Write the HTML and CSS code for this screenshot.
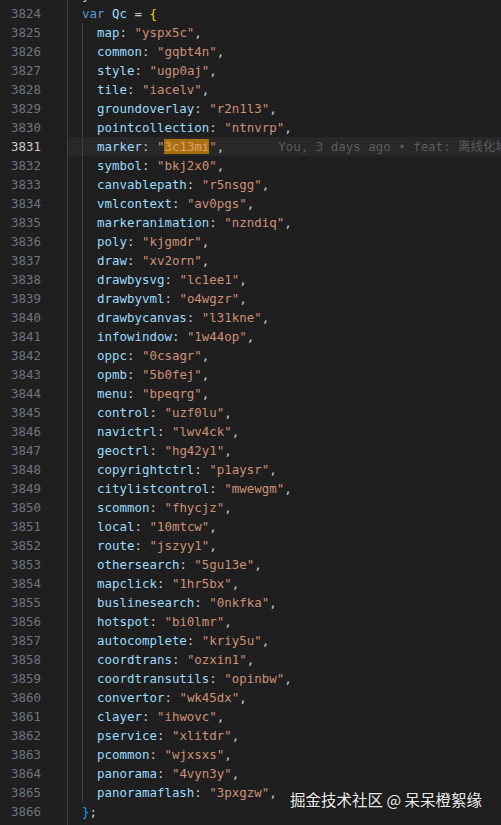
FILE: index.html
```html
<!DOCTYPE html>
<html>
<head>
<meta charset="utf-8">
<link rel="stylesheet" href="styles.css">
</head>
<body>
<div class="editor">
<div class="row"><div class="ln">3823</div><div class="code"><span class="ig"></span><span class="p">}</span></div></div>
<div class="row"><div class="ln">3824</div><div class="code"><span class="ig"></span><span class="kw">var</span> <span class="v">Qc</span> <span class="p">=</span> <span class="b1">{</span></div></div>
<div class="row"><div class="ln">3825</div><div class="code"><span class="ig"></span><span class="ig"></span><span class="k">map</span><span class="p">: </span><span class="s">"yspx5c"</span><span class="p">,</span></div></div>
<div class="row"><div class="ln">3826</div><div class="code"><span class="ig"></span><span class="ig"></span><span class="k">common</span><span class="p">: </span><span class="s">"gqbt4n"</span><span class="p">,</span></div></div>
<div class="row"><div class="ln">3827</div><div class="code"><span class="ig"></span><span class="ig"></span><span class="k">style</span><span class="p">: </span><span class="s">"ugp0aj"</span><span class="p">,</span></div></div>
<div class="row"><div class="ln">3828</div><div class="code"><span class="ig"></span><span class="ig"></span><span class="k">tile</span><span class="p">: </span><span class="s">"iacelv"</span><span class="p">,</span></div></div>
<div class="row"><div class="ln">3829</div><div class="code"><span class="ig"></span><span class="ig"></span><span class="k">groundoverlay</span><span class="p">: </span><span class="s">"r2n1l3"</span><span class="p">,</span></div></div>
<div class="row"><div class="ln">3830</div><div class="code"><span class="ig"></span><span class="ig"></span><span class="k">pointcollection</span><span class="p">: </span><span class="s">"ntnvrp"</span><span class="p">,</span></div></div>
<div class="row current"><div class="ln">3831</div><div class="code"><span class="ig"></span><span class="ig"></span><span class="k">marker</span><span class="p">: </span><span class="s">"<span class="match">3c13mi</span>"</span><span class="p">,</span><span class="blame">You, 3 days ago • feat: 离线化地图资源</span></div></div>
<div class="row"><div class="ln">3832</div><div class="code"><span class="ig"></span><span class="ig"></span><span class="k">symbol</span><span class="p">: </span><span class="s">"bkj2x0"</span><span class="p">,</span></div></div>
<div class="row"><div class="ln">3833</div><div class="code"><span class="ig"></span><span class="ig"></span><span class="k">canvablepath</span><span class="p">: </span><span class="s">"r5nsgg"</span><span class="p">,</span></div></div>
<div class="row"><div class="ln">3834</div><div class="code"><span class="ig"></span><span class="ig"></span><span class="k">vmlcontext</span><span class="p">: </span><span class="s">"av0pgs"</span><span class="p">,</span></div></div>
<div class="row"><div class="ln">3835</div><div class="code"><span class="ig"></span><span class="ig"></span><span class="k">markeranimation</span><span class="p">: </span><span class="s">"nzndiq"</span><span class="p">,</span></div></div>
<div class="row"><div class="ln">3836</div><div class="code"><span class="ig"></span><span class="ig"></span><span class="k">poly</span><span class="p">: </span><span class="s">"kjgmdr"</span><span class="p">,</span></div></div>
<div class="row"><div class="ln">3837</div><div class="code"><span class="ig"></span><span class="ig"></span><span class="k">draw</span><span class="p">: </span><span class="s">"xv2orn"</span><span class="p">,</span></div></div>
<div class="row"><div class="ln">3838</div><div class="code"><span class="ig"></span><span class="ig"></span><span class="k">drawbysvg</span><span class="p">: </span><span class="s">"lc1ee1"</span><span class="p">,</span></div></div>
<div class="row"><div class="ln">3839</div><div class="code"><span class="ig"></span><span class="ig"></span><span class="k">drawbyvml</span><span class="p">: </span><span class="s">"o4wgzr"</span><span class="p">,</span></div></div>
<div class="row"><div class="ln">3840</div><div class="code"><span class="ig"></span><span class="ig"></span><span class="k">drawbycanvas</span><span class="p">: </span><span class="s">"l31kne"</span><span class="p">,</span></div></div>
<div class="row"><div class="ln">3841</div><div class="code"><span class="ig"></span><span class="ig"></span><span class="k">infowindow</span><span class="p">: </span><span class="s">"1w44op"</span><span class="p">,</span></div></div>
<div class="row"><div class="ln">3842</div><div class="code"><span class="ig"></span><span class="ig"></span><span class="k">oppc</span><span class="p">: </span><span class="s">"0csagr"</span><span class="p">,</span></div></div>
<div class="row"><div class="ln">3843</div><div class="code"><span class="ig"></span><span class="ig"></span><span class="k">opmb</span><span class="p">: </span><span class="s">"5b0fej"</span><span class="p">,</span></div></div>
<div class="row"><div class="ln">3844</div><div class="code"><span class="ig"></span><span class="ig"></span><span class="k">menu</span><span class="p">: </span><span class="s">"bpeqrg"</span><span class="p">,</span></div></div>
<div class="row"><div class="ln">3845</div><div class="code"><span class="ig"></span><span class="ig"></span><span class="k">control</span><span class="p">: </span><span class="s">"uzf0lu"</span><span class="p">,</span></div></div>
<div class="row"><div class="ln">3846</div><div class="code"><span class="ig"></span><span class="ig"></span><span class="k">navictrl</span><span class="p">: </span><span class="s">"lwv4ck"</span><span class="p">,</span></div></div>
<div class="row"><div class="ln">3847</div><div class="code"><span class="ig"></span><span class="ig"></span><span class="k">geoctrl</span><span class="p">: </span><span class="s">"hg42y1"</span><span class="p">,</span></div></div>
<div class="row"><div class="ln">3848</div><div class="code"><span class="ig"></span><span class="ig"></span><span class="k">copyrightctrl</span><span class="p">: </span><span class="s">"p1aysr"</span><span class="p">,</span></div></div>
<div class="row"><div class="ln">3849</div><div class="code"><span class="ig"></span><span class="ig"></span><span class="k">citylistcontrol</span><span class="p">: </span><span class="s">"mwewgm"</span><span class="p">,</span></div></div>
<div class="row"><div class="ln">3850</div><div class="code"><span class="ig"></span><span class="ig"></span><span class="k">scommon</span><span class="p">: </span><span class="s">"fhycjz"</span><span class="p">,</span></div></div>
<div class="row"><div class="ln">3851</div><div class="code"><span class="ig"></span><span class="ig"></span><span class="k">local</span><span class="p">: </span><span class="s">"10mtcw"</span><span class="p">,</span></div></div>
<div class="row"><div class="ln">3852</div><div class="code"><span class="ig"></span><span class="ig"></span><span class="k">route</span><span class="p">: </span><span class="s">"jszyy1"</span><span class="p">,</span></div></div>
<div class="row"><div class="ln">3853</div><div class="code"><span class="ig"></span><span class="ig"></span><span class="k">othersearch</span><span class="p">: </span><span class="s">"5gu13e"</span><span class="p">,</span></div></div>
<div class="row"><div class="ln">3854</div><div class="code"><span class="ig"></span><span class="ig"></span><span class="k">mapclick</span><span class="p">: </span><span class="s">"1hr5bx"</span><span class="p">,</span></div></div>
<div class="row"><div class="ln">3855</div><div class="code"><span class="ig"></span><span class="ig"></span><span class="k">buslinesearch</span><span class="p">: </span><span class="s">"0nkfka"</span><span class="p">,</span></div></div>
<div class="row"><div class="ln">3856</div><div class="code"><span class="ig"></span><span class="ig"></span><span class="k">hotspot</span><span class="p">: </span><span class="s">"bi0lmr"</span><span class="p">,</span></div></div>
<div class="row"><div class="ln">3857</div><div class="code"><span class="ig"></span><span class="ig"></span><span class="k">autocomplete</span><span class="p">: </span><span class="s">"kriy5u"</span><span class="p">,</span></div></div>
<div class="row"><div class="ln">3858</div><div class="code"><span class="ig"></span><span class="ig"></span><span class="k">coordtrans</span><span class="p">: </span><span class="s">"ozxin1"</span><span class="p">,</span></div></div>
<div class="row"><div class="ln">3859</div><div class="code"><span class="ig"></span><span class="ig"></span><span class="k">coordtransutils</span><span class="p">: </span><span class="s">"opinbw"</span><span class="p">,</span></div></div>
<div class="row"><div class="ln">3860</div><div class="code"><span class="ig"></span><span class="ig"></span><span class="k">convertor</span><span class="p">: </span><span class="s">"wk45dx"</span><span class="p">,</span></div></div>
<div class="row"><div class="ln">3861</div><div class="code"><span class="ig"></span><span class="ig"></span><span class="k">clayer</span><span class="p">: </span><span class="s">"ihwovc"</span><span class="p">,</span></div></div>
<div class="row"><div class="ln">3862</div><div class="code"><span class="ig"></span><span class="ig"></span><span class="k">pservice</span><span class="p">: </span><span class="s">"xlitdr"</span><span class="p">,</span></div></div>
<div class="row"><div class="ln">3863</div><div class="code"><span class="ig"></span><span class="ig"></span><span class="k">pcommon</span><span class="p">: </span><span class="s">"wjxsxs"</span><span class="p">,</span></div></div>
<div class="row"><div class="ln">3864</div><div class="code"><span class="ig"></span><span class="ig"></span><span class="k">panorama</span><span class="p">: </span><span class="s">"4vyn3y"</span><span class="p">,</span></div></div>
<div class="row"><div class="ln">3865</div><div class="code"><span class="ig"></span><span class="ig"></span><span class="k">panoramaflash</span><span class="p">: </span><span class="s">"3pxgzw"</span><span class="p">,</span></div></div>
<div class="row"><div class="ln">3866</div><div class="code"><span class="ig"></span><span class="b3">}</span><span class="p">;</span></div></div>
<div class="row"><div class="ln">3867</div><div class="code"><span class="ig"></span><span class="v">Qc</span><span class="p">.</span><span class="k">sub</span> <span class="p">=</span> <span class="s">"ol3xzw"</span><span class="p">;</span></div></div>
</div>
<div class="watermark">掘金技术社区 @ 呆呆橙絮缘</div>
</body>
</html>
```

FILE: styles.css
```css
html, body {
  margin: 0;
  padding: 0;
  background: #1f1f1f;
  width: 501px;
  height: 825px;
  overflow: hidden;
}

.editor {
  margin-top: -15.5px;
  font-family: "DejaVu Sans Mono", "Liberation Mono", "Noto Sans CJK SC", monospace;
  font-size: 12.45px;
  color: #cccccc;
}

.row {
  display: flex;
  height: 19px;
  line-height: 19px;
  white-space: pre;
}

.ln {
  width: 41px;
  flex: none;
  text-align: right;
  padding-right: 26px;
  color: #6e7681;
}

.row.current .ln {
  color: #cccccc;
}

.code {
  flex: 1;
  min-width: 0;
  overflow: hidden;
  white-space: pre;
}

.row.current .code {
  background: #282828;
}

.ig {
  display: inline-block;
  width: 15px;
  height: 19px;
  vertical-align: top;
  box-shadow: inset 1px 0 0 #404040;
}

.kw { color: #569cd6; }
.v { color: #9cdcfe; }
.k { color: #9cdcfe; }
.s { color: #ce9178; }
.p { color: #cccccc; }
.b1 { color: #ffd700; }
.b3 { color: #179fff; }

.match {
  background: #a8700c;
  color: #e0a070;
}

.blame {
  margin-left: 54px;
  color: #5c5c5c;
}

.watermark {
  position: absolute;
  left: 290px;
  top: 788px;
  font-family: "Noto Sans CJK SC", sans-serif;
  font-size: 15.5px;
  line-height: 22px;
  color: #ececec;
  text-shadow: 0 0 2px rgba(0, 0, 0, 0.6);
  white-space: nowrap;
}
```
